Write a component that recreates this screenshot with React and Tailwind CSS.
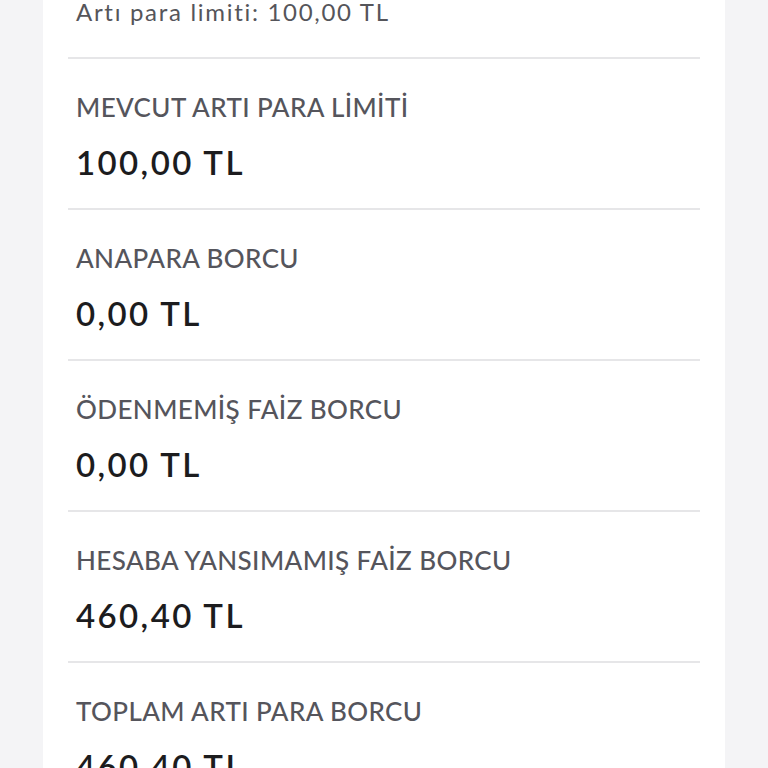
const rows = [
  { label: "MEVCUT ARTI PARA LİMİTİ", value: "100,00 TL" },
  { label: "ANAPARA BORCU", value: "0,00 TL" },
  { label: "ÖDENMEMİŞ FAİZ BORCU", value: "0,00 TL" },
  { label: "HESABA YANSIMAMIŞ FAİZ BORCU", value: "460,40 TL" },
  { label: "TOPLAM ARTI PARA BORCU", value: "460,40 TL" },
];

export default function App() {
  return (
    <div
      className="h-[768px] overflow-hidden bg-[#f4f4f6]"
      style={{ fontFamily: "Lato, 'Noto Sans', sans-serif" }}
    >
      <div className="mx-[43px] h-full bg-white px-[25px]">
        <div className="px-[8px] pb-[33px] text-[24px] leading-[24px] tracking-[1.7px] text-[#55555a]">
          Artı para limiti: 100,00 TL
        </div>
        {rows.map((r) => (
          <div key={r.label} className="border-t-2 border-[#e6e6e8]">
            <div className="px-[8px] pt-[32px] pb-[26px]">
              <div className="text-[26px] leading-[32px] font-medium tracking-[0.4px] text-[#55555c]">
                {r.label}
              </div>
              <div className="mt-[19px] text-[33px] leading-[40px] font-semibold tracking-[2.4px] text-[#1c1c1e]">
                {r.value}
              </div>
            </div>
          </div>
        ))}
      </div>
    </div>
  );
}
